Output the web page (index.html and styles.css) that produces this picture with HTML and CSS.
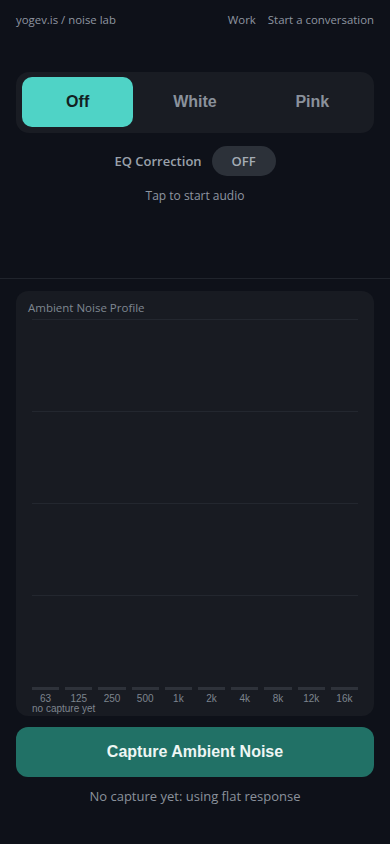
FILE: index.html
```html
<!DOCTYPE html>
<html lang="en">
<head>
<meta charset="utf-8">
<meta name="viewport" content="width=device-width, initial-scale=1">
<title>noise lab</title>
<link rel="stylesheet" href="styles.css">
</head>
<body>
<header class="topbar">
  <a class="brand" href="#">yogev.is / noise lab</a>
  <nav class="nav">
    <a href="#">Work</a>
    <a href="#">Start a conversation</a>
  </nav>
</header>

<main class="main">
  <section class="controls">
    <div class="segmented">
      <button class="seg seg-active">Off</button>
      <button class="seg">White</button>
      <button class="seg">Pink</button>
    </div>
    <div class="eq-row">
      <span class="eq-label">EQ Correction</span>
      <button class="toggle">OFF</button>
    </div>
    <p class="hint">Tap to start audio</p>
  </section>

  <hr class="divider">

  <section class="card">
    <h2 class="card-title">Ambient Noise Profile</h2>
    <div class="chart">
      <div class="grid">
        <div class="grid-row"></div>
        <div class="grid-row"></div>
        <div class="grid-row"></div>
        <div class="grid-row"></div>
      </div>
      <div class="bars">
        <span class="bar"></span><span class="bar"></span><span class="bar"></span><span class="bar"></span><span class="bar"></span>
        <span class="bar"></span><span class="bar"></span><span class="bar"></span><span class="bar"></span><span class="bar"></span>
      </div>
      <div class="labels">
        <span>63</span><span>125</span><span>250</span><span>500</span><span>1k</span>
        <span>2k</span><span>4k</span><span>8k</span><span>12k</span><span>16k</span>
      </div>
      <div class="status">no capture yet</div>
    </div>
  </section>

  <button class="capture">Capture Ambient Noise</button>
  <p class="note">No capture yet: using flat response</p>
</main>
</body>
</html>
```

FILE: styles.css
```css
* { box-sizing: border-box; }

html, body {
  margin: 0;
  padding: 0;
  background: #0e1119;
}

body {
  font-family: "Open Sans", "Noto Sans", sans-serif;
  color: #9aa1ab;
  width: 390px;
  min-height: 844px;
}

a { color: inherit; text-decoration: none; }

.topbar {
  display: flex;
  justify-content: space-between;
  align-items: center;
  height: 38px;
  padding: 0 16px;
  font-size: 11.4px;
  color: #8e96a1;
}

.nav {
  display: flex;
  gap: 12px;
}

.main {
  padding: 34px 16px 0;
}

.controls {
  display: flex;
  flex-direction: column;
  align-items: stretch;
}

.segmented {
  display: grid;
  grid-template-columns: repeat(3, 1fr);
  gap: 6px;
  padding: 5px 6px 6px;
  background: #191c23;
  border-radius: 13px;
}

.seg {
  height: 50px;
  border: 0;
  border-radius: 10px;
  background: transparent;
  font-family: "Liberation Sans", Arial, sans-serif;
  font-weight: 700;
  font-size: 16px;
  color: #8a919b;
  cursor: pointer;
}

.seg-active {
  background: #4fd3c6;
  color: #12211f;
}

.eq-row {
  display: flex;
  justify-content: center;
  align-items: center;
  gap: 10px;
  margin-top: 13px;
}

.eq-label {
  font-size: 13px;
  font-weight: 600;
  color: #9aa1ab;
}

.toggle {
  width: 64px;
  height: 30px;
  border: 0;
  border-radius: 15px;
  background: #2c3139;
  color: #a5acb5;
  font-family: "Open Sans", "Noto Sans", sans-serif;
  font-weight: 600;
  font-size: 13px;
}

.hint {
  margin: 11px 0 0;
  text-align: center;
  font-size: 12px;
  color: #8e96a1;
}

.divider {
  margin: 74px -16px 0;
  border: 0;
  border-top: 1px solid #20242c;
}

.card {
  margin-top: 12px;
  background: #181b22;
  border-radius: 12px;
  padding: 9px 16px 3px;
}

.card-title {
  margin: 0 0 0 -4px;
  font-size: 11.5px;
  font-weight: 400;
  color: #7f8791;
  line-height: 16px;
}

.chart {
  margin-top: 3px;
}

.grid {
  display: flex;
  flex-direction: column;
  height: 368px;
}

.grid-row {
  flex: 1;
  border-top: 1px solid #23272f;
}

.bars {
  display: grid;
  grid-template-columns: repeat(10, 1fr);
  gap: 6px;
}

.bar {
  height: 3px;
  background: #2e323a;
}

.labels {
  display: grid;
  grid-template-columns: repeat(10, 1fr);
  gap: 6px;
  margin-top: 3px;
  font-family: "Liberation Sans", Arial, sans-serif;
  font-size: 10px;
  line-height: 11px;
  color: #7d848e;
  text-align: center;
}

.status {
  font-family: "Liberation Sans", Arial, sans-serif;
  font-size: 10px;
  line-height: 9px;
  color: #7d848e;
}

.capture {
  display: block;
  width: 100%;
  height: 50px;
  margin-top: 11px;
  border: 0;
  border-radius: 12px;
  background: #217166;
  color: #eef6f4;
  font-family: "Liberation Sans", Arial, sans-serif;
  font-weight: 700;
  font-size: 16px;
}

.note {
  margin: 10px 0 0;
  text-align: center;
  font-size: 13px;
  color: #8b929c;
}
```
